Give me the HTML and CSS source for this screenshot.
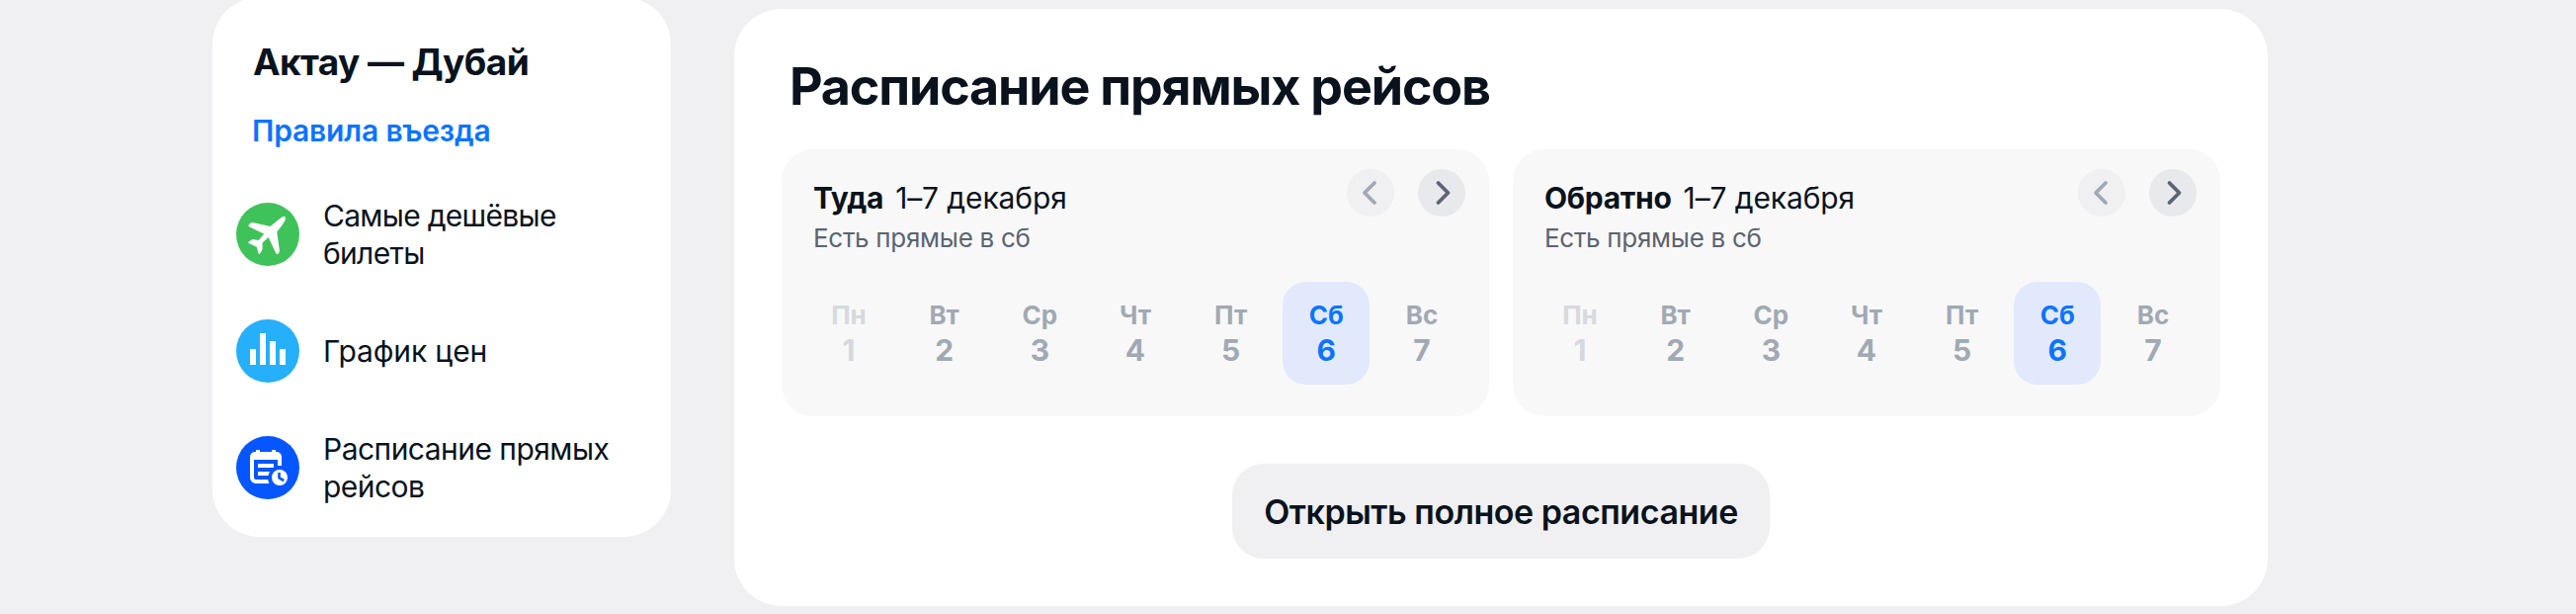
FILE: index.html
```
<!DOCTYPE html>
<html lang="ru">
<head>
<meta charset="utf-8">
<title>Актау — Дубай</title>
<link rel="stylesheet" href="styles.css">
</head>
<body>
<div class="page">
  <aside class="sidebar">
    <h2 class="route">Актау — Дубай</h2>
    <a class="rules">Правила въезда</a>
    <nav class="menu">
      <a class="item">
        <svg class="item-icon" viewBox="0 0 64 64"><circle cx="32" cy="32" r="32" fill="#3fc25a"/><path fill="#fff" d="M34.5 24 45.6 15.1C47.2 14 48.8 13.6 49.6 14.3 50.3 15 50 16.900 49 18.700 48 20.700 44.500 25.500 41.300 29.500L43.900 48.600C44 49.800 43 51.400 41.800 51.900 41 52.200 40.500 51.700 40.100 50.900L32.700 34.900 26.600 40.600 26.600 47.300 24 51.700C23.500 52.300 22.700 52.100 22.500 51.300L20.900 45 12.700 41C12.100 40.600 12.100 39.900 12.700 39.400L16.500 37 22.800 37.900 28.200 31.500 13.600 24.600C12.600 24.100 12.200 23.400 12.700 22.500 13.500 21 15.100 19.900 16.700 19.900Z"/></svg>
        <span class="item-text tight">Самые дешёвые<br>билеты</span>
      </a>
      <a class="item">
        <svg class="item-icon" viewBox="0 0 64 64"><circle cx="32" cy="32" r="32" fill="#26affb"/><path fill="#fff" d="M14 30h6v16h-6zM24 14h6v32h-6zM34 22h6v24h-6zM44 30h6v16h-6z"/></svg>
        <span class="item-text">График цен</span>
      </a>
      <a class="item">
        <svg class="item-icon" viewBox="0 0 64 64"><circle cx="32" cy="32" r="32" fill="#0656ff"/><path fill="#fff" fill-rule="evenodd" d="M20 14h4v2h12v-2h4v2h1a5 5 0 0 1 5 5v9h-4v-6H18v18a2 2 0 0 0 2 2h12.300a12 12 0 0 0 1 4H20a6 6 0 0 1-6-6V21a5 5 0 0 1 5-5h1zM22 28h16v4H22zM22 36h12a11 11 0 0 0-1.500 4H22z"/><circle cx="44" cy="42" r="8" fill="#fff"/><path d="M43.500 37v5.300l4.700 2.700" fill="none" stroke="#0656ff" stroke-width="2.600"/></svg>
        <span class="item-text medium">Расписание прямых<br>рейсов</span>
      </a>
    </nav>
  </aside>
  <main class="schedule">
    <h1 class="heading">Расписание прямых рейсов</h1>
    <div class="directions">
      <section class="direction">
        <header class="top">
          <div>
            <div class="period"><b class="way">Туда</b><span class="dates">1–7 декабря</span></div>
            <div class="note">Есть прямые в сб</div>
          </div>
          <div class="arrows">
            <span class="arrow off"><svg viewBox="0 0 48 48"><path d="M28 14 18 24l10 10"/></svg></span>
            <span class="arrow"><svg viewBox="0 0 48 48"><path d="m20.500 14 10 10-10 10"/></svg></span>
          </div>
        </header>
        <div class="week">
          <div class="day past"><span>Пн</span><b>1</b></div>
          <div class="day"><span>Вт</span><b>2</b></div>
          <div class="day"><span>Ср</span><b>3</b></div>
          <div class="day"><span>Чт</span><b>4</b></div>
          <div class="day"><span>Пт</span><b>5</b></div>
          <div class="day active"><span>Сб</span><b>6</b></div>
          <div class="day"><span>Вс</span><b>7</b></div>
        </div>
      </section>
      <section class="direction">
        <header class="top">
          <div>
            <div class="period"><b class="way">Обратно</b><span class="dates">1–7 декабря</span></div>
            <div class="note">Есть прямые в сб</div>
          </div>
          <div class="arrows">
            <span class="arrow off"><svg viewBox="0 0 48 48"><path d="M28 14 18 24l10 10"/></svg></span>
            <span class="arrow"><svg viewBox="0 0 48 48"><path d="m20.500 14 10 10-10 10"/></svg></span>
          </div>
        </header>
        <div class="week">
          <div class="day past"><span>Пн</span><b>1</b></div>
          <div class="day"><span>Вт</span><b>2</b></div>
          <div class="day"><span>Ср</span><b>3</b></div>
          <div class="day"><span>Чт</span><b>4</b></div>
          <div class="day"><span>Пт</span><b>5</b></div>
          <div class="day active"><span>Сб</span><b>6</b></div>
          <div class="day"><span>Вс</span><b>7</b></div>
        </div>
      </section>
    </div>
    <button class="open">Открыть полное расписание</button>
  </main>
</div>
</body>
</html>
```
FILE: styles.css
```
* { box-sizing: border-box; }
body {
  margin: 0;
  background: #f0f0f2;
  color: #0a131d;
  font-family: "Inter", sans-serif;
  overflow: hidden;
}
.page {
  display: flex;
  align-items: flex-start;
  gap: 64px;
  height: 621px;
  padding-left: 215px;
}
.sidebar {
  width: 464px;
  height: 546px;
  margin-top: -3px;
  padding: 43px 24px 32px 40px;
  border-radius: 48px;
  background: #fff;
}
.route {
  margin: 0 0 0 1px;
  font-size: 37px;
  line-height: 45px;
  font-weight: 700;
  letter-spacing: -0.58px;
  white-space: nowrap;
}
.rules {
  display: block;
  margin-top: 28px;
  color: #0b74ff;
  font-size: 30px;
  line-height: 38px;
  font-weight: 600;
  letter-spacing: -0.167px;
}
.menu {
  display: flex;
  flex-direction: column;
  gap: 42px;
  margin: 48px 0 0 -16px;
}
.item {
  display: flex;
  align-items: center;
  gap: 24px;
  height: 76px;
}
.item-icon { width: 64px; height: 64px; flex: none; }
.item-text {
  font-size: 30px;
  line-height: 38px;
  letter-spacing: -0.134px;
  white-space: nowrap;
}
.item-text.tight { letter-spacing: -0.7px; }
.item-text.medium { letter-spacing: -0.533px; }
.schedule {
  display: flex;
  flex-direction: column;
  width: 1552px;
  height: 604px;
  margin-top: 9px;
  padding: 49px 48px 48px;
  border-radius: 48px;
  background: #fff;
}
.heading {
  margin: 0 0 33px 8px;
  font-size: 52px;
  line-height: 60px;
  font-weight: 700;
  letter-spacing: -1.19px;
}
.directions {
  display: grid;
  grid-template-columns: 1fr 1fr;
  gap: 24px;
}
.direction {
  height: 270px;
  padding: 20px 24px 32px 32px;
  border-radius: 32px;
  background: #f8f8f8;
}
.top {
  display: flex;
  justify-content: space-between;
  height: 86px;
}
.period {
  display: flex;
  gap: 12px;
  margin-top: 10px;
  font-size: 30px;
  line-height: 38px;
}
.way { font-weight: 700; letter-spacing: -0.3px; }
.dates { letter-spacing: -0.119px; }
.note {
  margin-top: 5px;
  color: #5b6472;
  font-size: 26px;
  line-height: 33px;
  letter-spacing: -0.296px;
}
.arrows { display: flex; gap: 24px; }
.arrow {
  width: 48px;
  height: 48px;
  border-radius: 50%;
  background: #e8e9ed;
  color: #5b6472;
}
.arrow.off { background: #f0f0f2; color: #a0a9b4; }
.arrow svg {
  display: block;
  fill: none;
  stroke: currentColor;
  stroke-width: 3.8;
  stroke-linecap: round;
  stroke-linejoin: round;
}
.week {
  display: flex;
  justify-content: space-between;
  margin: 28px 0 0 -8px;
}
.day {
  display: flex;
  flex-direction: column;
  align-items: center;
  width: 88px;
  height: 104px;
  padding-top: 18.5px;
  border-radius: 24px;
  color: #a0a9b4;
  font-size: 26px;
  line-height: 30px;
  font-weight: 700;
}
.day b {
  margin-top: 1.5px;
  font-size: 30px;
  line-height: 38px;
  font-weight: 700;
}
.day.past { color: #d6d9de; }
.day.active { background: #e2e9fc; color: #0b74ff; }
.open {
  align-self: center;
  width: 544px;
  height: 96px;
  margin-top: 48px;
  padding: 1px 0 0;
  border: 0;
  border-radius: 32px;
  background: #f0f0f2;
  color: #0a131d;
  font: 600 34px/42px "Inter", sans-serif;
  letter-spacing: -0.465px;
  white-space: nowrap;
}
```
